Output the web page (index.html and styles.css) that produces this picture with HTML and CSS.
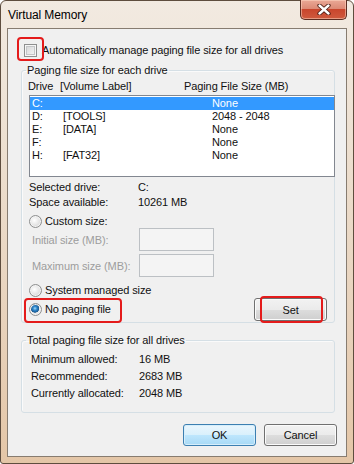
FILE: index.html
```html
<!DOCTYPE html>
<html lang="en">
<head>
  <meta charset="UTF-8" />
  <meta name="viewport" content="width=device-width, initial-scale=1.0"/>
  <title>Virtual Memory</title>
  <link rel="stylesheet" href="styles.css">
</head>
<body>
  <div class="window">
    <header class="titlebar">
      <span class="title">Virtual Memory</span>
      <button class="close-btn" aria-label="Close">
        <svg width="14" height="11" viewBox="0 0 14 11">
          <path d="M2.5 1.5 L11.5 9.5 M11.5 1.5 L2.5 9.5" stroke="#4b1c12" stroke-width="4.2" stroke-linecap="round"/>
          <path d="M2.5 1.5 L11.5 9.5 M11.5 1.5 L2.5 9.5" stroke="#ffffff" stroke-width="2.4" stroke-linecap="round"/>
        </svg>
      </button>
    </header>

    <main class="client">
      <label class="check-row">
        <span class="checkbox marked"></span>
        <span>Automatically manage paging file size for all drives</span>
      </label>

      <fieldset class="group drives">
        <legend>Paging file size for each drive</legend>
        <div class="list-head">
          <span class="head-drive">Drive</span>
          <span class="head-label">[Volume Label]</span>
          <span>Paging File Size (MB)</span>
        </div>
        <ul class="drive-list">
          <li class="selected"><span class="col-drive">C:</span><span class="col-label"></span><span>None</span></li>
          <li><span class="col-drive">D:</span><span class="col-label">[TOOLS]</span><span>2048 - 2048</span></li>
          <li><span class="col-drive">E:</span><span class="col-label">[DATA]</span><span>None</span></li>
          <li><span class="col-drive">F:</span><span class="col-label"></span><span>None</span></li>
          <li><span class="col-drive">H:</span><span class="col-label">[FAT32]</span><span>None</span></li>
        </ul>

        <div class="info-row first"><span class="info-label">Selected drive:</span><span>C:</span></div>
        <div class="info-row"><span class="info-label">Space available:</span><span>10261 MB</span></div>

        <label class="radio-row custom"><span class="radio"></span><span>Custom size:</span></label>
        <div class="size-row"><span class="size-label">Initial size (MB):</span><span class="textbox"></span></div>
        <div class="size-row second"><span class="size-label">Maximum size (MB):</span><span class="textbox"></span></div>
        <label class="radio-row system"><span class="radio"></span><span>System managed size</span></label>

        <div class="set-row">
          <label class="radio-row marked"><span class="radio checked"></span><span>No paging file</span></label>
          <button class="btn marked">Set</button>
        </div>
      </fieldset>

      <fieldset class="group totals">
        <legend>Total paging file size for all drives</legend>
        <div class="stat-row first"><span class="stat-label">Minimum allowed:</span><span>16 MB</span></div>
        <div class="stat-row"><span class="stat-label">Recommended:</span><span>2683 MB</span></div>
        <div class="stat-row"><span class="stat-label">Currently allocated:</span><span>2048 MB</span></div>
      </fieldset>

      <div class="footer">
        <button class="btn default">OK</button>
        <button class="btn">Cancel</button>
      </div>
    </main>
  </div>
</body>
</html>
```

FILE: styles.css
```css
* {
  box-sizing: border-box;
}

body {
  margin: 0;
  font-family: "Liberation Sans", Arial, sans-serif;
  font-size: 11px;
  letter-spacing: -0.1px;
  color: #111;
  background: #fff;
  white-space: nowrap;
}

.window {
  width: 354px;
  height: 464px;
  display: flex;
  flex-direction: column;
  padding: 0 6px 6px;
  border: 1px solid #5e4d3e;
  border-radius: 6px 6px 3px 3px;
  background: linear-gradient(180deg, #f2eae1 0%, #ede0d1 30%, #e8d2bb 70%, #e4c6a7 100%);
}

/* title bar */
.titlebar {
  height: 27px;
  display: flex;
  align-items: flex-start;
  justify-content: space-between;
}

.title {
  padding: 7px 0 0 1px;
  line-height: 15px;
  font-size: 12px;
  color: #000;
}

.close-btn {
  width: 47px;
  height: 20px;
  margin-top: -1px;
  padding: 0;
  display: flex;
  align-items: center;
  justify-content: center;
  border: 1px solid #5c2d22;
  border-top: none;
  border-radius: 0 0 5px 5px;
  background: linear-gradient(180deg, #eaa896 0%, #dc8a76 45%, #c9462d 50%, #cf5a3e 100%);
  box-shadow: inset 0 0 0 1px rgba(255, 220, 200, 0.5);
}

/* client area */
.client {
  flex: 1;
  border: 1px solid #877c70;
  background: #f0f0f0;
}

.check-row {
  display: flex;
  align-items: center;
  gap: 5px;
  height: 13px;
  line-height: 13px;
  margin: 15px 0 0 16px;
}

.checkbox {
  position: relative;
  width: 13px;
  height: 13px;
  border: 1px solid #8e8f8f;
  background: linear-gradient(135deg, #d2d3d4, #f8f8f8);
  box-shadow: inset 0 0 0 1px #f6f6f6, inset 0 0 0 2px #c4c6c8;
}

.checkbox.marked::after {
  content: "";
  position: absolute;
  left: -8px;
  right: -8px;
  top: -8px;
  bottom: -5px;
  border: 2px solid #e41b1b;
  border-radius: 4px;
}

/* group boxes */
.group {
  margin: 6px 11px 0 13px;
  padding: 0 0 1px;
  min-width: 0;
  border: 1px solid #d5dfe5;
  border-radius: 3px;
  box-shadow: inset 1px 1px 0 #fafafa;
}

.group legend {
  margin-left: 4px;
  padding: 0 1px;
  line-height: 14px;
}

.group.totals {
  margin-top: 10px;
  padding-bottom: 10px;
}

.list-head {
  display: flex;
  margin-top: 2px;
  padding-left: 6px;
  line-height: 14px;
}

.head-drive {
  width: 32px;
}

.head-label {
  width: 124px;
}

.drive-list {
  list-style: none;
  width: 306px;
  height: 82px;
  margin: 2px 0 0 7px;
  padding: 1px 0 0;
  border: 1px solid #828790;
  background: #fff;
}

.drive-list li {
  display: flex;
  height: 13px;
  line-height: 13px;
  padding-left: 2px;
}

.drive-list li.selected {
  background: #3399ff;
  color: #fff;
}

.col-drive {
  width: 31px;
}

.col-label {
  width: 149px;
}

.info-row {
  display: flex;
  line-height: 15px;
  padding-left: 7px;
}

.info-row.first {
  margin-top: 3px;
}

.info-label {
  width: 109px;
}

/* radios */
.radio-row {
  display: flex;
  align-items: center;
  gap: 3px;
  height: 13px;
  line-height: 13px;
  margin-left: 7px;
}

.radio-row.custom {
  margin-top: 5px;
}

.radio-row.system {
  margin-top: 7px;
}

.radio {
  width: 13px;
  height: 13px;
  border-radius: 50%;
  border: 1px solid #8e8f8f;
  background: radial-gradient(circle at 40% 40%, #ffffff 0, #e8e8e8 45%, #c6c6c6 100%);
  box-shadow: inset 0 0 0 1px #f4f4f4;
}

.radio.checked {
  background: radial-gradient(circle at 45% 40%, #a8dbf8 0, #2d86cc 2px, #1b5a91 4px, #ececec 4.5px, #d6d6d6 100%);
}

.radio-row.marked {
  position: relative;
}

.radio-row.marked::after {
  content: "";
  position: absolute;
  left: -5px;
  top: -5px;
  width: 94px;
  height: 21px;
  border: 2px solid #e41b1b;
  border-radius: 4px;
}

.size-row {
  display: flex;
  align-items: center;
  height: 23px;
  padding-left: 10px;
  color: #9d9d9d;
}

.size-row.second {
  margin-top: 3px;
}

.size-label {
  width: 107px;
}

.textbox {
  width: 75px;
  height: 23px;
  border: 1px solid #bcc0c4;
  background: #f4f4f4;
}

.set-row {
  display: flex;
  align-items: center;
  justify-content: space-between;
  height: 23px;
  margin-top: 1px;
  padding-right: 7px;
}

/* buttons */
.btn {
  width: 73px;
  height: 23px;
  padding: 0;
  font-family: inherit;
  font-size: 11px;
  letter-spacing: -0.1px;
  color: #111;
  border: 1px solid #707070;
  border-radius: 3px;
  background: linear-gradient(180deg, #f2f2f2 0%, #ebebeb 50%, #dddddd 51%, #cfcfcf 100%);
  box-shadow: inset 0 0 0 1px #fbfbfb;
}

.btn.marked {
  position: relative;
}

.btn.marked::after {
  content: "";
  position: absolute;
  left: 5px;
  right: 3px;
  top: -3px;
  bottom: -3px;
  border: 2px solid #e41b1b;
  border-radius: 4px;
}

.btn.default {
  border-color: #3c7fb1;
  background: linear-gradient(180deg, #eaf6fd 0%, #d9f0fc 50%, #bee6fd 51%, #a7d9f5 100%);
  box-shadow: inset 0 0 0 1px #d6eefb;
}

.stat-row {
  display: flex;
  line-height: 17px;
  padding-left: 9px;
}

.stat-row.first {
  margin-top: 4px;
}

.stat-label {
  width: 108px;
}

.footer {
  display: flex;
  justify-content: flex-end;
  gap: 8px;
  margin-top: 11px;
  padding-right: 9px;
}

.footer .btn {
  height: 22px;
}
```
